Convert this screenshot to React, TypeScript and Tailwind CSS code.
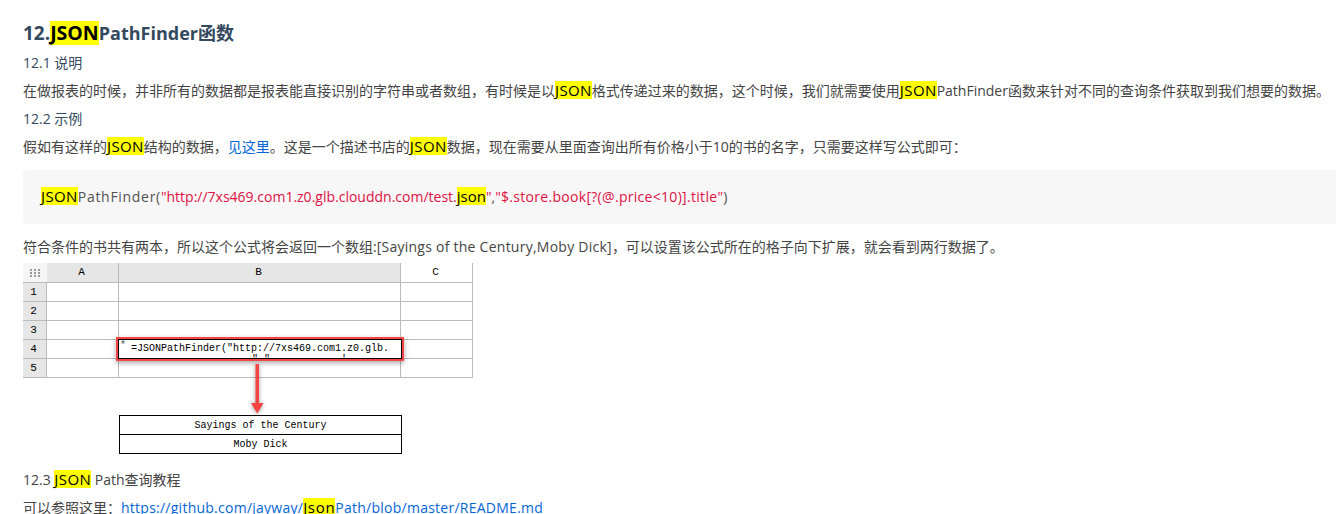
const rows = ['1', '2', '3', '4', '5']

function Hl({ children }: { children: string }) {
  return <mark className="inline-block h-[18px] bg-[#ffff00] text-[15px] leading-[18px] tracking-[0.4px] text-black">{children}</mark>
}

function Sheet() {
  return (
    <div className="relative w-[450px] font-['Liberation_Mono',monospace] text-[11px] text-black">
      <div className="grid h-[115px] grid-cols-[24px_72px_282px_72px] grid-rows-[20px_repeat(5,19px)] border-r border-[#bbbbbb]">
        <div className="flex items-center justify-center border-b border-[#bbbbbb] bg-[#f5f5f5]">
          <svg width="10" height="8" viewBox="0 0 10 8" fill="#999999">
            <rect x="0" y="0" width="2" height="2" />
            <rect x="4" y="0" width="2" height="2" />
            <rect x="8" y="0" width="2" height="2" />
            <rect x="0" y="3" width="2" height="2" />
            <rect x="4" y="3" width="2" height="2" />
            <rect x="8" y="3" width="2" height="2" />
            <rect x="0" y="6" width="2" height="2" />
            <rect x="4" y="6" width="2" height="2" />
            <rect x="8" y="6" width="2" height="2" />
          </svg>
        </div>
        <div className="flex items-center justify-center border-b border-r border-[#bbbbbb] bg-[#e6e6e6] pr-[2px]">A</div>
        <div className="flex items-center justify-center border-b border-r border-[#bbbbbb] bg-[#e6e6e6] pr-[2px]">B</div>
        <div className="flex items-center justify-center border-b border-[#bbbbbb] pr-[3px]">C</div>
        {rows.map((r) => (
          <div key={r} className="contents">
            <div className="flex items-center justify-center border-b border-r border-[#bbbbbb] bg-[#e6e6e6] pr-[2px]">{r}</div>
            <div className="border-b border-r border-[#bbbbbb]"></div>
            <div className="border-b border-r border-[#bbbbbb]"></div>
            <div className="border-b border-[#bbbbbb]"></div>
          </div>
        ))}
      </div>
      <div className="absolute left-[93px] top-[74px] h-[24px] w-[288px] border-2 border-[#f44444] bg-white shadow-[0_2px_5px_rgba(0,0,0,0.35)]">
        <div className="relative flex h-full items-center overflow-hidden border border-black pb-[2px] pl-[12px] text-[10px]">
          <span className="absolute left-[1px] top-[-2px] text-[#555555]">*</span>
          =JSONPathFinder("http://7xs469.com1.z0.glb.
          <span className="absolute left-[133px] top-[15px] leading-none">"</span>
          <span className="absolute left-[145px] top-[15px] leading-none">"</span>
          <span className="absolute left-[222px] top-[15px] leading-none">'</span>
        </div>
      </div>
    </div>
  )
}

function Result() {
  return (
    <div className="ml-[96px] w-[283px] border border-black font-['Liberation_Mono',monospace] text-[10px] text-black">
      <div className="flex h-[19px] items-center justify-center border-b border-black">Sayings of the Century</div>
      <div className="flex h-[18px] items-center justify-center">Moby Dick</div>
    </div>
  )
}

export default function App() {
  return (
    <div className="h-[514px] w-[1336px] overflow-hidden bg-white pl-[23px] pt-[21px] font-['Open_Sans','Noto_Sans_CJK_SC',sans-serif] text-[14px] text-[#444444]">
      <h2 className="flex h-[24px] items-center text-[18px] font-bold leading-[24px] text-[#34495e]">
        <span className="text-[19px]">12.</span>
        <mark className="bg-[#ffff00] text-[19.5px] leading-[24px] text-black">JSON</mark>
        <span>PathFinder函数</span>
      </h2>
      <h3 className="mt-[8px] leading-[20px] text-[#34495e]">12.1 说明</h3>
      <p className="mt-[8px] leading-[20px] whitespace-nowrap">
        在做报表的时候，并非所有的数据都是报表能直接识别的字符串或者数组，有时候是以<Hl>JSON</Hl>格式传递过来的数据，这个时候，我们就需要使用<Hl>JSON</Hl>PathFinder函数来针对不同的查询条件获取到我们想要的数据。
      </p>
      <h3 className="mt-[8px] leading-[20px] text-[#34495e]">12.2 示例</h3>
      <p className="mt-[8px] leading-[20px] whitespace-nowrap">
        假如有这样的<Hl>JSON</Hl>结构的数据，<a className="text-[#0366d6]">见这里</a>。这是一个描述书店的<Hl>JSON</Hl>数据，现在需要从里面查询出所有价格小于10的书的名字，只需要这样写公式即可：
      </p>
      <div className="mt-[13px] flex h-[54px] items-center whitespace-pre rounded-l-[4px] bg-[#f7f7f7] pb-[2px] pl-[18px] text-[#525252]">
        <Hl>JSON</Hl>
        <span className="tracking-[0.7px]">PathFinder(</span>
        <span className="text-[#dd1144]">"http://7xs469.com1.z0.glb.clouddn.com/test.</span>
        <mark className="inline-block h-[18px] bg-[#ffff00] text-[15px] leading-[18px] text-black">json</mark>
        <span className="text-[#dd1144]">"</span>
        <span>,</span>
        <span className="tracking-[0.3px] text-[#dd1144]">"$.store.book[?(@.price&lt;10)].title"</span>
        <span>)</span>
      </div>
      <p className="mt-[13px] leading-[20px] whitespace-nowrap">
        符合条件的书共有两本，所以这个公式将会返回一个数组:<span className="tracking-[0.25px]">[Sayings of the Century,Moby Dick]</span>，可以设置该公式所在的格子向下扩展，就会看到两行数据了。
      </p>
      <div className="mt-[6px]">
        <Sheet />
        <svg className="relative mt-[-14px] ml-[226px] block drop-shadow-[0_1px_2px_rgba(0,0,0,0.4)]" width="16" height="51" viewBox="0 0 16 51">
          <path d="M6.5 0h3.5v40h-3.5z" fill="#f44444" />
          <path d="M2 39h12.5l-6.25 10.5z" fill="#f44444" />
        </svg>
        <Result />
      </div>
      <p className="mt-[16px] leading-[20px]">
        <span>12.3 </span><Hl>JSON</Hl><span> Path查询教程</span>
      </p>
      <p className="mt-[8px] leading-[20px] whitespace-nowrap">
        可以参照这里：<a className="tracking-[0.25px] text-[#0366d6]">https://github.com/jayway/<mark className="inline-block h-[18px] bg-[#ffff00] text-[15px] leading-[18px] tracking-[0.7px] text-black">Json</mark>Path/blob/master/README.md</a>
      </p>
    </div>
  )
}
